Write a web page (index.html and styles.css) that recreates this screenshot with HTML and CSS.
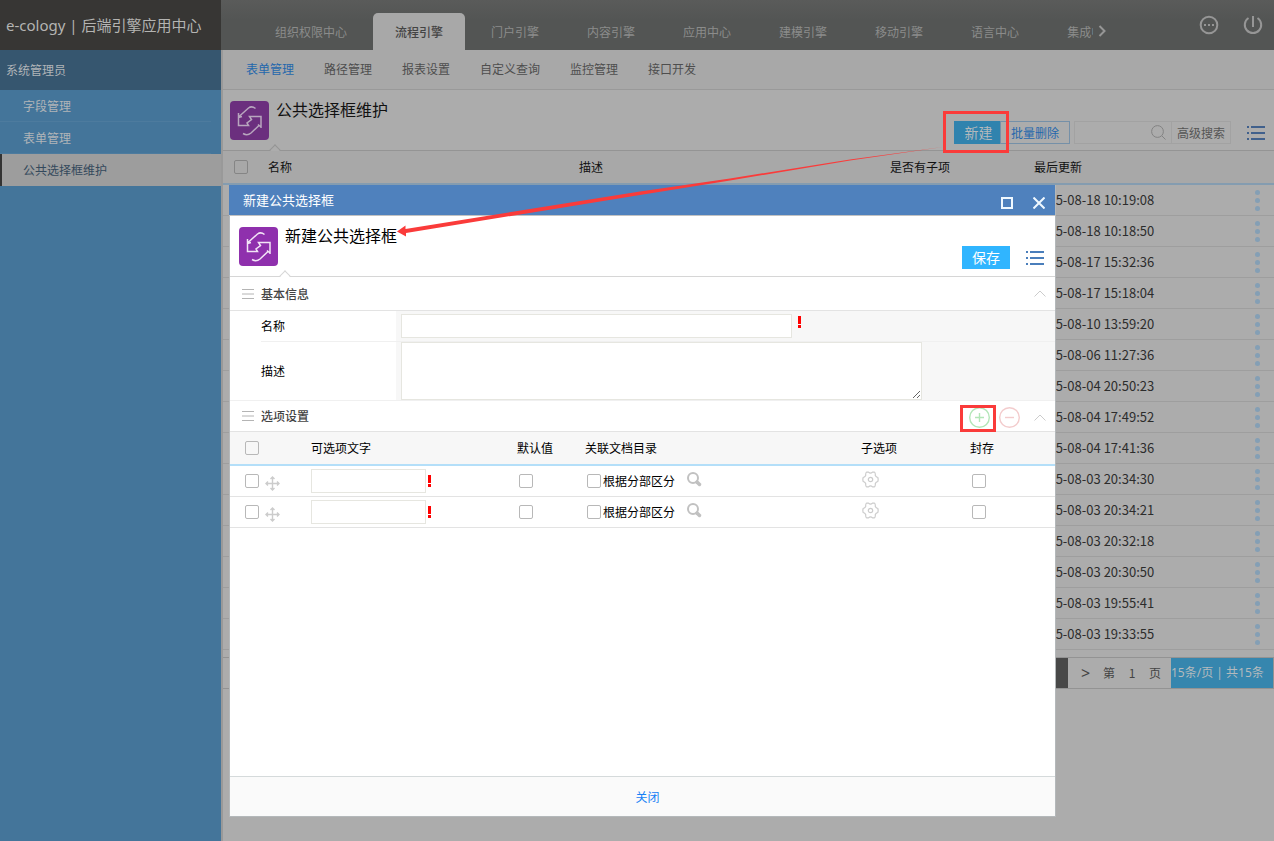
FILE: index.html
```
<!DOCTYPE html>
<html lang="zh-CN">
<head>
<meta charset="utf-8">
<title>e-cology | 后端引擎应用中心</title>
<link rel="stylesheet" href="styles.css">
</head>
<body>
<svg class="defs" aria-hidden="true">
  <symbol id="i-swap" viewBox="0 0 39 39"><path d="M25.500 7.500C23 5.500 20.500 5.500 18.500 7L8.500 16M8.500 12V24.500H18.500L17 22L21.500 18.500L19.500 15.500H31V27M8.500 16.500L12 15.500M31 26L28 23.500M29.500 24L21 32C18 34.500 15.500 34 13 32.500"/></symbol>
  <symbol id="i-list" viewBox="0 0 18 15"><path d="M0 1h2M4 1h14M0 7h2M4 7h14M0 13h2M4 13h14"/></symbol>
  <symbol id="i-up" viewBox="0 0 12 7"><path d="M.5 6.500L6 1L11.500 6.500"/></symbol>
  <symbol id="i-bars" viewBox="0 0 12 10"><path d="M0 .5h12M0 5h12M0 9.500h12"/></symbol>
  <symbol id="i-dots" viewBox="0 0 5 21"><circle cx="2.500" cy="2.500" r="2.500"/><circle cx="2.500" cy="10.500" r="2.500"/><circle cx="2.500" cy="18.500" r="2.500"/></symbol>
  <symbol id="i-bang" viewBox="0 0 3 12"><path d="M0 0h3v8H0zM0 9h3v3H0z"/></symbol>
  <symbol id="i-move" viewBox="0 0 15 15"><path d="M7.500 1v13M1 7.500h13M5.500 3L7.500 1L9.500 3M5.500 12L7.500 14L9.500 12M3 5.500L1 7.500L3 9.500M12 5.500L14 7.500L12 9.500"/></symbol>
  <symbol id="i-find" viewBox="0 0 15 15"><circle cx="6" cy="6" r="5"/><path class="handle" d="M10 10L12.500 12.500"/></symbol>
  <symbol id="i-gear" viewBox="0 0 17 17"><path d="M4.500 1.200L6.500 1.200Q8.500 3.200 10.500 1.200L12.500 1.200Q13.500 1.700 13.300 4.500Q14 6 15.800 6.500Q16.500 8.500 15.800 10.500Q14 11 13.300 12.500Q13.500 15.300 12.500 15.800L10.500 15.800Q8.500 13.800 6.500 15.800L4.500 15.800Q3.500 15.300 3.700 12.500Q3 11 1.200 10.500Q.5 8.500 1.200 6.500Q3 6 3.700 4.500Q3.500 1.700 4.500 1.200Z"/><circle cx="8.500" cy="8.500" r="2.200"/></symbol>
</svg>

<header class="top">
  <h1 class="brand">e-cology | 后端引擎应用中心</h1>
  <nav class="tabs" aria-label="模块">
    <a href="#">组织权限中心</a>
    <a href="#" class="active">流程引擎</a>
    <a href="#">门户引擎</a>
    <a href="#">内容引擎</a>
    <a href="#">应用中心</a>
    <a href="#">建模引擎</a>
    <a href="#">移动引擎</a>
    <a href="#">语言中心</a>
    <a href="#">集成中心</a>
  </nav>
  <div class="tools">
    <button class="plain next" aria-label="更多模块"><svg width="8" height="12" viewBox="0 0 8 12"><path d="M1.500 1L6.500 6L1.500 11"/></svg></button>
    <button class="plain" aria-label="更多"><svg width="20" height="20" viewBox="0 0 20 20"><circle cx="10" cy="10" r="8.300"/><path d="M5 10h2M9 10h2M13 10h2"/></svg></button>
    <button class="plain" aria-label="退出"><svg width="20" height="20" viewBox="0 0 20 20"><path d="M10 1v11M5.500 3A8.200 8.200 0 1 0 14.500 3"/></svg></button>
  </div>
</header>

<div class="body">
  <aside class="side">
    <p class="user">系统管理员</p>
    <nav aria-label="菜单">
      <a href="#"><span>字段管理</span></a>
      <a href="#"><span>表单管理</span></a>
      <a href="#" class="current"><span>公共选择框维护</span></a>
    </nav>
  </aside>

  <main class="main">
    <nav class="subnav" aria-label="子菜单">
      <a href="#" class="active">表单管理</a>
      <a href="#">路径管理</a>
      <a href="#">报表设置</a>
      <a href="#">自定义查询</a>
      <a href="#">监控管理</a>
      <a href="#">接口开发</a>
    </nav>

    <div class="page-head">
      <svg class="app-icon"><use href="#i-swap"/></svg>
      <h2>公共选择框维护</h2>
      <div class="actions">
        <span class="marked"><button class="primary">新建</button></span>
        <button class="outline">批量删除</button>
        <div class="search">
          <input type="text" aria-label="搜索">
          <button class="plain" aria-label="搜索"><svg width="15" height="15" viewBox="0 0 15 15"><circle cx="6.500" cy="6.500" r="5.900"/><path d="M11 11L14.500 14.500"/></svg></button>
          <button class="plain advanced">高级搜索</button>
        </div>
        <button class="plain list" aria-label="菜单"><svg width="18" height="15"><use href="#i-list"/></svg></button>
      </div>
    </div>

    <table class="records">
      <colgroup><col class="c-check"><col class="c-name"><col class="c-name"><col class="c-sub"><col><col class="c-more"></colgroup>
      <thead><tr><th><input type="checkbox" aria-label="全选"></th><th>名称</th><th>描述</th><th>是否有子项</th><th>最后更新</th><th></th></tr></thead>
      <tbody>
        <tr><td></td><td></td><td></td><td></td><td>2015-08-18 10:19:08</td><td><svg><use href="#i-dots"/></svg></td></tr>
        <tr><td></td><td></td><td></td><td></td><td>2015-08-18 10:18:50</td><td><svg><use href="#i-dots"/></svg></td></tr>
        <tr><td></td><td></td><td></td><td></td><td>2015-08-17 15:32:36</td><td><svg><use href="#i-dots"/></svg></td></tr>
        <tr><td></td><td></td><td></td><td></td><td>2015-08-17 15:18:04</td><td><svg><use href="#i-dots"/></svg></td></tr>
        <tr><td></td><td></td><td></td><td></td><td>2015-08-10 13:59:20</td><td><svg><use href="#i-dots"/></svg></td></tr>
        <tr><td></td><td></td><td></td><td></td><td>2015-08-06 11:27:36</td><td><svg><use href="#i-dots"/></svg></td></tr>
        <tr><td></td><td></td><td></td><td></td><td>2015-08-04 20:50:23</td><td><svg><use href="#i-dots"/></svg></td></tr>
        <tr><td></td><td></td><td></td><td></td><td>2015-08-04 17:49:52</td><td><svg><use href="#i-dots"/></svg></td></tr>
        <tr><td></td><td></td><td></td><td></td><td>2015-08-04 17:41:36</td><td><svg><use href="#i-dots"/></svg></td></tr>
        <tr><td></td><td></td><td></td><td></td><td>2015-08-03 20:34:30</td><td><svg><use href="#i-dots"/></svg></td></tr>
        <tr><td></td><td></td><td></td><td></td><td>2015-08-03 20:34:21</td><td><svg><use href="#i-dots"/></svg></td></tr>
        <tr><td></td><td></td><td></td><td></td><td>2015-08-03 20:32:18</td><td><svg><use href="#i-dots"/></svg></td></tr>
        <tr><td></td><td></td><td></td><td></td><td>2015-08-03 20:30:50</td><td><svg><use href="#i-dots"/></svg></td></tr>
        <tr><td></td><td></td><td></td><td></td><td>2015-08-03 19:55:41</td><td><svg><use href="#i-dots"/></svg></td></tr>
        <tr><td></td><td></td><td></td><td></td><td>2015-08-03 19:33:55</td><td><svg><use href="#i-dots"/></svg></td></tr>
      </tbody>
    </table>

    <div class="pager">
      <span class="page-now"></span>
      <button class="plain" aria-label="下一页">&gt;</button>
      <label>第<input type="text" value="1" aria-label="页码">页</label>
      <span class="total">15条/页 | 共15条</span>
    </div>
  </main>
</div>

<section class="dialog" role="dialog" aria-labelledby="dialog-title">
  <header class="dialog-bar">
    <h2 id="dialog-title">新建公共选择框</h2>
    <button class="plain" aria-label="最大化"><svg width="12" height="12" viewBox="0 0 12 12"><path d="M1 1h10v10H1z"/></svg></button>
    <button class="plain" aria-label="关闭窗口"><svg width="12" height="12" viewBox="0 0 12 12"><path d="M.5 .5L11.500 11.500M11.500 .5L.5 11.500"/></svg></button>
  </header>
  <div class="page-head">
    <svg class="app-icon"><use href="#i-swap"/></svg>
    <h2>新建公共选择框</h2>
    <div class="actions">
      <button class="primary">保存</button>
      <button class="plain list" aria-label="菜单"><svg width="18" height="15"><use href="#i-list"/></svg></button>
    </div>
  </div>

  <div class="section-head first">
    <svg class="bars"><use href="#i-bars"/></svg>
    <h3>基本信息</h3>
    <button class="plain" aria-label="收起"><svg class="up"><use href="#i-up"/></svg></button>
  </div>
  <div class="field">
    <label for="f-name">名称</label>
    <div class="control"><input id="f-name" type="text"><svg class="bang"><use href="#i-bang"/></svg></div>
  </div>
  <div class="field last">
    <label for="f-desc">描述</label>
    <div class="control tall"><textarea id="f-desc"></textarea></div>
  </div>

  <div class="section-head">
    <svg class="bars"><use href="#i-bars"/></svg>
    <h3>选项设置</h3>
    <span class="marked"><button class="plain add" aria-label="添加"><svg width="21" height="21" viewBox="0 0 21 21"><circle cx="10.500" cy="10.500" r="9.800"/><path d="M6 10.500h9M10.500 6v9"/></svg></button></span>
    <button class="plain remove" aria-label="删除"><svg width="21" height="21" viewBox="0 0 21 21"><circle cx="10.500" cy="10.500" r="9.800"/><path d="M6 10.500h9"/></svg></button>
    <button class="plain" aria-label="收起"><svg class="up"><use href="#i-up"/></svg></button>
  </div>
  <table class="options">
    <colgroup><col class="o-check"><col class="o-text"><col class="o-default"><col><col class="o-sub"><col class="o-seal"></colgroup>
    <thead><tr><th><input type="checkbox" aria-label="全选"></th><th>可选项文字</th><th>默认值</th><th>关联文档目录</th><th>子选项</th><th>封存</th></tr></thead>
    <tbody>
      <tr>
        <td><div class="cell start"><input type="checkbox" aria-label="选择第1行"><svg class="move"><use href="#i-move"/></svg></div></td>
        <td><div class="cell"><input type="text" aria-label="可选项文字"><svg class="bang"><use href="#i-bang"/></svg></div></td>
        <td><div class="cell box"><input type="checkbox" aria-label="默认值"></div></td>
        <td><div class="cell box"><label><input type="checkbox">根据分部区分</label><button class="plain find" aria-label="浏览"><svg><use href="#i-find"/></svg></button></div></td>
        <td><button class="plain gear" aria-label="子选项"><svg><use href="#i-gear"/></svg></button></td>
        <td><div class="cell box"><input type="checkbox" aria-label="封存"></div></td>
      </tr>
      <tr>
        <td><div class="cell start"><input type="checkbox" aria-label="选择第2行"><svg class="move"><use href="#i-move"/></svg></div></td>
        <td><div class="cell"><input type="text" aria-label="可选项文字"><svg class="bang"><use href="#i-bang"/></svg></div></td>
        <td><div class="cell box"><input type="checkbox" aria-label="默认值"></div></td>
        <td><div class="cell box"><label><input type="checkbox">根据分部区分</label><button class="plain find" aria-label="浏览"><svg><use href="#i-find"/></svg></button></div></td>
        <td><button class="plain gear" aria-label="子选项"><svg><use href="#i-gear"/></svg></button></td>
        <td><div class="cell box"><input type="checkbox" aria-label="封存"></div></td>
      </tr>
    </tbody>
  </table>
  <footer class="dialog-foot"><button class="plain">关闭</button></footer>
</section>

<svg class="arrow" viewBox="0 0 548 92" aria-hidden="true"><path d="M0 84.500L8.500 78.500V82L243 44.500L333 31.500L453 12.500L546 0L453 13.500L333 33.500L243 48L9 86V89.500Z"/></svg>
</body>
</html>
```
FILE: styles.css
```
* { box-sizing: border-box; }
body {
  margin: 0;
  min-height: 100vh;
  display: flex;
  flex-direction: column;
  background: #acacac;
  color: #111;
  font: 12px/16px "Noto Sans CJK SC", "Noto Sans", sans-serif;
}
h1, h2, h3, p { margin: 0; font-weight: 400; }
a { color: inherit; text-decoration: none; }
button, input, textarea { font: inherit; color: inherit; margin: 0; padding: 0; }
svg { display: block; fill: none; }
.defs { position: absolute; width: 0; height: 0; }
.plain { border: 0; background: none; }

input[type="checkbox"] {
  appearance: none;
  flex: none;
  width: 14px;
  height: 14px;
  border: 1px solid #b8b8b8;
  border-radius: 2px;
  vertical-align: middle;
}

/* top bar */
.top { display: flex; height: 50px; background: linear-gradient(#5a5b5a, #535554 40%); }
.brand {
  flex: none;
  width: 221px;
  padding: 0 6px;
  background: #373634;
  color: #b4b4b2;
  font-family: "Noto Sans", "Noto Sans CJK SC", sans-serif;
  font-size: 15px;
  line-height: 50px;
  white-space: nowrap;
}
.tabs {
  flex: 1;
  min-width: 0;
  display: flex;
  gap: 4px;
  padding: 13px 0 0 32px;
  overflow: hidden;
}
.tabs a {
  flex: none;
  padding: 0 22px;
  color: #8b8c8b;
  line-height: 37px;
}
.tabs .active {
  background: #a8a8a8;
  color: #444;
  font-weight: 500;
  border-radius: 5px 5px 0 0;
}
.tools {
  flex: none;
  width: 181px;
  display: flex;
  align-items: center;
  gap: 24px;
  padding-right: 11px;
}
.tools svg { stroke: #969696; stroke-width: 2; }
.tools .next { margin: 12px auto 0 5px; }

/* sidebar */
.body { flex: 1; display: flex; }
.side { flex: none; width: 221px; background: #44759a; color: #b0b4b8; }
.user { padding: 0 6px; background: #36566f; line-height: 40px; }
.side a { display: block; padding: 0 10px 0 23px; line-height: 32px; }
.side a:not(.current) { background: linear-gradient(#4d7b9e, #4d7b9e) 0 100% / 211px 1px no-repeat; }
.side .current {
  padding-left: 21px;
  border-left: 2px solid #333;
  background: #9d9d9d;
  color: #34495c;
}

/* main area */
.main { flex: 1; min-width: 0; border-left: 2px solid #999; }
.subnav {
  display: flex;
  gap: 30px;
  padding: 0 23px;
  height: 40px;
  line-height: 38px;
  background: #a8a8a8;
  border-bottom: 1px solid #999;
  color: #4e4e4e;
}
.subnav .active { color: #2467ac; }

.page-head {
  position: relative;
  display: flex;
  height: 61px;
  border-bottom: 1px solid #949494;
}
.main .page-head { padding: 11px 9px 0 7px; }
.app-icon {
  flex: none;
  width: 39px;
  height: 39px;
  border-radius: 4px;
  background: #6b2f7e;
  stroke: #b8a6be;
  stroke-width: 1.5;
}
.page-head h2 { margin-left: 7px; font-size: 16px; line-height: 16px; }
.page-head::after {
  content: "";
  position: absolute;
  left: 48px;
  bottom: -4px;
  width: 7px;
  height: 7px;
  border: solid #949494;
  border-width: 1px 0 0 1px;
  background: linear-gradient(135deg, #acacac 50%, transparent 50%);
  transform: rotate(45deg);
}
.actions { margin-left: auto; display: flex; align-self: flex-start; align-items: center; }
.main .actions { padding-top: 20px; }
.marked { position: relative; z-index: 2; }
.marked::after {
  content: "";
  position: absolute;
  inset: -10px -9px -9px -11px;
  border: 3px solid #fa3b3a;
  pointer-events: none;
}
.primary {
  display: block;
  width: 46px;
  height: 23px;
  border: 0;
  background: #3083ae;
  color: #b5b9bc;
  font-size: 14px;
  line-height: 23px;
}
.main .primary { padding-left: 3px; }
.outline {
  width: 70px;
  height: 23px;
  border: 1px solid #7590a8;
  background: none;
  color: #2467ac;
}
.search {
  display: flex;
  align-items: center;
  width: 157px;
  height: 23px;
  margin: 0 16px 0 4px;
  border: 1px solid #a2a2a2;
}
.search input { flex: 1; min-width: 0; height: 21px; border: 0; background: none; outline: 0; }
.search svg { margin-right: 5px; stroke: #838383; }
.search .advanced { width: 59px; height: 21px; border-left: 1px solid #a2a2a2; color: #555; }
.list { padding-top: 2px; }
.list svg { stroke: #40608c; stroke-width: 2; }

table { width: 100%; table-layout: fixed; border-collapse: separate; border-spacing: 0; }
th, td { padding: 0; text-align: left; font-weight: 400; }
.records th { height: 34px; background: #a8a8a8; border-bottom: 2px solid #849cb0; }
.records th input { margin: -4px 0 0 11px; border-color: #858585; }
.records td {
  height: 31px;
  border-bottom: 1px solid #9e9e9e;
  color: #2c2c2c;
  font-size: 13px;
}
.records svg { width: 5px; height: 21px; margin-left: 16px; fill: #849fb5; }
.c-check { width: 45px; }
.c-name { width: 311px; }
.c-sub { width: 144px; }
.c-more { width: 35px; }

.pager {
  display: flex;
  justify-content: flex-end;
  align-items: center;
  height: 32px;
  margin-top: 7px;
  border: solid #939393;
  border-width: 1px 1px 1px 0;
  color: #444;
}
.page-now { width: 32px; height: 30px; background: #484848; }
.pager button { width: 35px; font-family: "Noto Sans", sans-serif; font-size: 16px; }
.pager label { display: flex; margin-right: 10px; }
.pager input { width: 34px; border: 0; background: none; text-align: center; }
.total {
  width: 102px;
  background: #3686ae;
  color: #b4babd;
  font-family: "Noto Sans", "Noto Sans CJK SC", sans-serif;
  line-height: 30px;
  white-space: nowrap;
}

/* dialog over the page */
.dialog {
  position: absolute;
  top: 185px;
  right: 218px;
  bottom: 24px;
  left: 229px;
  display: flex;
  flex-direction: column;
  border: 1px solid #b4b8ba;
  border-top: 0;
  background: #fff;
}
.dialog-bar {
  flex: none;
  display: flex;
  align-items: center;
  gap: 20px;
  height: 31px;
  margin-left: -1px;
  padding: 0 10px 0 14px;
  background: #4f81bd;
  border-bottom: 1px solid #c2c2c2;
  color: #fff;
}
.dialog-bar h2 { margin-right: auto; font-size: 13px; line-height: 30px; }
.dialog-bar svg { margin-top: 5px; stroke: #eff8ff; stroke-width: 2; }
.dialog .page-head { flex: none; padding: 11px 11px 0 9px; border-color: #d6d6d6; }
.dialog .page-head::after {
  left: 51px;
  border-color: #d6d6d6;
  background: linear-gradient(135deg, #fff 50%, transparent 50%);
}
.dialog .page-head h2 { color: #000; }
.dialog .app-icon { background: #8f30ad; stroke: #f2e4f6; }
.dialog .actions { padding-top: 19px; gap: 16px; }
.dialog .primary { width: 48px; background: #30b5ff; color: #fff; }
.dialog .list svg { stroke: #4a7ebb; }

.section-head {
  flex: none;
  display: flex;
  align-items: center;
  gap: 7px;
  height: 31px;
  padding: 0 9px 0 12px;
  border-bottom: 1px solid #e3e3e3;
  color: #444;
}
.section-head.first { height: 34px; }
.section-head h3 { margin-right: auto; font-size: 12px; font-weight: 500; }
.bars { width: 12px; height: 10px; stroke: #b4b4b4; }
.up { width: 12px; height: 7px; margin: 3px 0 0 7px; stroke: #ccc; stroke-width: 1; }
.first .up { margin-top: 0; }
.add svg, .remove svg { stroke-width: 1.400; }
.add, .remove { display: block; }
.remove, .section-head .marked { margin-top: 3px; }
.add svg { stroke: #b3e6b8; }
.remove svg { stroke: #f3cccd; }
.section-head .marked { margin-right: 2px; }
.section-head .marked::after { inset: -2px -6px -4px -9px; }

.field { flex: none; display: flex; margin-left: 31px; color: #000; border-bottom: 1px solid #f0f0f0; }
.field.last { margin-left: 0; padding-left: 31px; }
.field label { flex: none; width: 135px; align-self: center; }
.control { flex: 1; display: flex; padding: 3px 5px; gap: 6px; background: #f7f7f7; }
.control.tall { padding: 0 5px; }
.control input { width: 391px; height: 24px; }
.field input, .field textarea, .options input[type="text"] { border: 1px solid #e6e6e0; background: #fff; }
.control textarea { width: 521px; height: 58px; resize: both; }
.bang { flex: none; width: 3px; height: 12px; fill: #f00; }
.control .bang { margin-top: 2px; }

.options { flex: none; color: #000; }
.options th { height: 34px; background: #f7f7f7; border-bottom: 2px solid #b4dff9; }
.options th input { margin: -4px 0 0 15px; }
.options td { height: 31px; border-bottom: 1px solid #e3e3e3; }
.options .o-check { width: 81px; }
.o-text { width: 206px; }
.o-default { width: 68px; }
.o-sub { width: 109px; }
.o-seal { width: 85px; }
.cell { display: flex; align-items: center; gap: 2px; }
.cell label { display: flex; align-items: center; gap: 2px; }
.cell input[type="text"] { width: 115px; height: 24px; }
.start { padding-left: 15px; gap: 6px; }
.box { padding-left: 2px; }
.move { width: 15px; height: 15px; margin-top: 4px; stroke: #ccc; stroke-width: 1.400; }
.find { margin: -4px 0 0 10px; }
.find svg { width: 15px; height: 15px; stroke: #c1c1c1; stroke-width: 2; }
.handle { stroke-width: 3.500; stroke-linecap: round; }
.gear { display: block; }
.gear svg { width: 17px; height: 17px; margin: -4px 0 0 1px; stroke: #ccc; stroke-width: 1.200; }

.dialog-foot {
  margin-top: auto;
  display: flex;
  justify-content: center;
  align-items: center;
  height: 40px;
  padding-left: 10px;
  border-top: 1px solid #d5dadb;
  background: #fafafa;
  color: #1680f5;
}
.dialog-foot button { padding: 4px 8px; }

.arrow { position: absolute; z-index: 3; left: 397px; top: 147px; width: 548px; height: 92px; fill: #fa3b3a; pointer-events: none; }
```
